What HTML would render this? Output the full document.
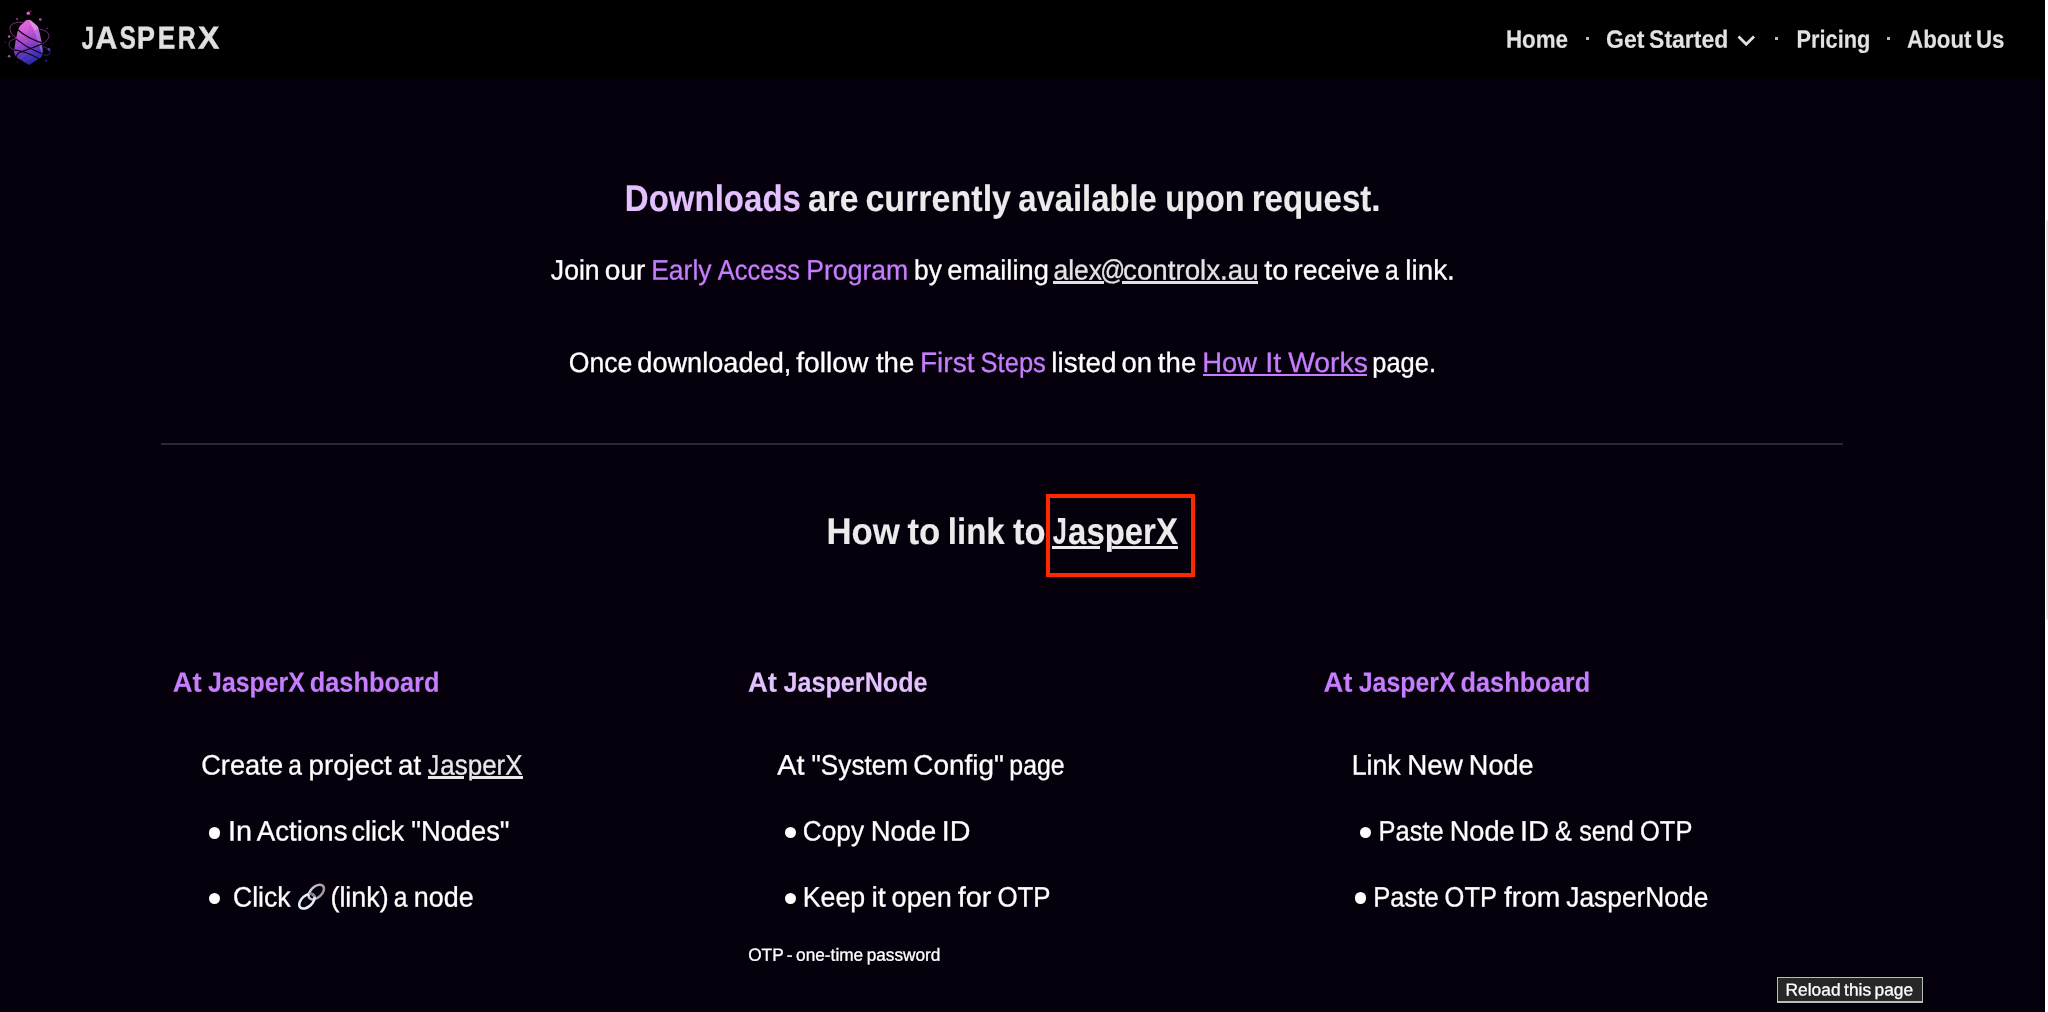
<!DOCTYPE html>
<html lang="en">
<head>
<meta charset="utf-8">
<title>JasperX - Downloads</title>
<style>
html,body{margin:0;padding:0;}
body{width:2048px;height:1012px;overflow:hidden;background:#06000c;font-family:"Liberation Sans",sans-serif;position:relative;}
.t{position:absolute;left:0;top:0;white-space:pre;line-height:1;transform-origin:0 0;display:block;}
.b{position:absolute;display:block;}
.dot{position:absolute;width:3px;height:3px;background:#b8b8b8;top:36.6px;}
.bul{position:absolute;width:11.2px;height:11.2px;border-radius:50%;background:#fff;}
.ul{position:absolute;height:2px;}
</style>
</head>
<body>
<!-- header -->
<div class="b" style="left:0;top:0;width:2048px;height:79px;background:#000"></div>

<!-- logo -->
<svg class="b" style="left:0;top:0" width="64" height="79" viewBox="0 0 64 79">
  <defs>
    <linearGradient id="cg" x1="0.38" y1="0" x2="0.62" y2="1">
      <stop offset="0" stop-color="#e068d8"/>
      <stop offset="0.28" stop-color="#c452d2"/>
      <stop offset="0.52" stop-color="#9242c8"/>
      <stop offset="0.76" stop-color="#4f33b8"/>
      <stop offset="1" stop-color="#2526a2"/>
    </linearGradient>
    <clipPath id="cc"><path d="M28.75 19.7 Q27 19.8 25.7 20.6 L19.9 25.9 Q18.3 28.5 17.4 32.3 L15.75 40 L14.2 49.4 Q13.9 52 14.5 53.8 Q15.3 56.2 17.1 57.7 L27.6 64.3 Q28.75 65.1 29.9 64.4 L40.65 57.7 Q41.9 56.6 42.3 54.95 Q42.9 52.5 42.75 49.97 L41.9 42.8 L40.1 34.5 L38.4 27.8 Q37.8 26.4 36.8 25.6 L31.8 20.9 Q30.4 19.7 28.75 19.7 Z"/></clipPath>
  </defs>
  <!-- orbit rings (outside portions) -->
  <g fill="none" stroke-width="0.85" stroke-linecap="round">
    <path d="M22.7 22.3 Q17 21.6 13.5 23.4 Q10 25.2 9.9 27.8 Q9.9 30.6 11.3 33.4 Q12.8 35.6 16 37.8" stroke="#8b3f88"/>
    <path d="M15.7 38.4 Q11.5 39.6 9.7 41.7 Q8.6 43.6 9.1 45.5 Q10 47.6 11.9 48.9 Q13.2 49.7 14.9 50.2" stroke="#74367e"/>
    <path d="M39.8 29.2 Q44 29.8 46.7 31.7 Q48.9 33.6 48.95 36.1 Q48.8 38.6 46.7 40.6 Q45 42.4 42.6 43.9" stroke="#7c3a86"/>
    <path d="M43.4 46.6 Q46.4 47.8 48.4 49.4 Q50.3 50.8 50.3 52.2 Q50.2 53.8 48.95 54.7 Q47 55.6 44 55.2" stroke="#352d92"/>
  </g>
  <!-- crystal -->
  <path d="M28.75 19.7 Q27 19.8 25.7 20.6 L19.9 25.9 Q18.3 28.5 17.4 32.3 L15.75 40 L14.2 49.4 Q13.9 52 14.5 53.8 Q15.3 56.2 17.1 57.7 L27.6 64.3 Q28.75 65.1 29.9 64.4 L40.65 57.7 Q41.9 56.6 42.3 54.95 Q42.9 52.5 42.75 49.97 L41.9 42.8 L40.1 34.5 L38.4 27.8 Q37.8 26.4 36.8 25.6 L31.8 20.9 Q30.4 19.7 28.75 19.7 Z" fill="url(#cg)"/>
  <g clip-path="url(#cc)">
    <path d="M29.2 19.6 L37.2 25.8 L38.7 28.6 L34.3 30.6 L31 24.4 Z" fill="#f0c6f2" opacity="0.5"/>
    <path d="M38.7 28.6 L42.9 50 L42.4 55.2 L39 45 L34.3 30.6 Z" fill="#cfa4e6" opacity="0.38"/>
    <path d="M28.6 19.7 L31 24.4 L26 34 L18.4 28 Z" fill="#ff86ea" opacity="0.16"/>
    <g stroke="#fff" stroke-width="0.5" opacity="0.13" fill="none">
      <path d="M15 47.2 L27 40.2"/><path d="M15.6 52.6 L24.4 47"/><path d="M20 58.4 L31 50.4"/><path d="M24.5 61.4 L33 55.4"/><path d="M27 36.5 L34.5 31"/>
    </g>
    <!-- black wrap bands -->
    <g fill="none" stroke="#0b0411" stroke-width="1.1">
      <path d="M16.9 29 Q27.5 38.6 43.2 43.4"/>
      <path d="M15 38.1 Q24 45 30.1 48.3 Q36.5 51.6 43.6 54.2"/>
      <path d="M43 43.6 Q35.5 46.8 29 48.9 Q22.5 51 18.2 53.3 Q16.6 54.6 16.4 57.4"/>
      <path d="M13.6 49.8 Q20.5 50.9 26.3 52.7 Q33.5 55.4 40.5 59.5"/>
    </g>
  </g>
  <!-- sparkles -->
  <g>
    <circle cx="28.3" cy="13.2" r="1.75" fill="#dc5ad2"/>
    <circle cx="30.7" cy="11.2" r="0.7" fill="#a6479e"/>
    <circle cx="17.1" cy="19" r="1.05" fill="#8c3f8c"/>
    <circle cx="40.3" cy="19.5" r="1.35" fill="#bd4fbd"/>
    <circle cx="47" cy="28.3" r="0.8" fill="#6a2f6e"/>
    <circle cx="9.1" cy="36.4" r="1.25" fill="#bd4fbd"/>
    <circle cx="5.4" cy="42.2" r="0.7" fill="#4e2552"/>
    <circle cx="9.1" cy="56.3" r="1.3" fill="#a848b8"/>
    <circle cx="17.4" cy="62.1" r="0.7" fill="#4c2a70"/>
    <circle cx="48.95" cy="49.4" r="1.35" fill="#5a3cb8"/>
    <circle cx="46.2" cy="60.8" r="1" fill="#2c2c98"/>
    <circle cx="51.4" cy="44.4" r="0.55" fill="#2a1f4a"/>
  </g>
</svg>

<!-- nav separators + chevron -->
<span class="dot" style="left:1586px"></span>
<span class="dot" style="left:1775.2px"></span>
<span class="dot" style="left:1887px"></span>
<svg class="b" style="left:1734px;top:32px" width="24" height="18" viewBox="0 0 24 18">
  <polyline points="4.5,4.6 12.25,12.3 20,4.6" fill="none" stroke="#e2e2e2" stroke-width="2.8" stroke-linecap="butt" stroke-linejoin="miter"/>
</svg>

<!-- hr -->
<div class="b" style="left:161px;top:443px;width:1682px;height:2px;background:#2a2831"></div>

<!-- underlines (with skip-ink gaps) -->
<div class="ul" style="left:1053.3px;top:281.2px;width:50.8px;height:2.4px;background:#e2e2e2"></div>
<div class="ul" style="left:1122.4px;top:281.2px;width:135.6px;height:2.4px;background:#e2e2e2"></div>
<div class="ul" style="left:1202.6px;top:373.8px;width:164.6px;height:2.3px;background:#c77dff"></div>
<div class="ul" style="left:1052.3px;top:546.2px;width:47.9px;height:2.7px;background:#ebebeb"></div>
<div class="ul" style="left:1111.6px;top:546.2px;width:66.6px;height:2.7px;background:#ebebeb"></div>
<div class="ul" style="left:427.5px;top:776.2px;width:36.5px;height:2.4px;background:#e8e8e8"></div>
<div class="ul" style="left:472.4px;top:776.2px;width:50.7px;height:2.4px;background:#e8e8e8"></div>

<!-- red highlight box -->
<div class="b" style="left:1046px;top:494px;width:141px;height:75px;border:4px solid #ff2800"></div>

<!-- bullets -->
<span class="bul" style="left:209px;top:827.4px"></span>
<span class="bul" style="left:209px;top:892.8px"></span>
<span class="bul" style="left:784.8px;top:827.3px"></span>
<span class="bul" style="left:784.8px;top:892.9px"></span>
<span class="bul" style="left:1360px;top:826.9px"></span>
<span class="bul" style="left:1354.5px;top:892.4px"></span>

<!-- link emoji -->
<svg class="b" style="left:296px;top:882px" width="32" height="30" viewBox="0 0 32 30">
  <defs>
    <linearGradient id="lk" x1="0" y1="0" x2="1" y2="1">
      <stop offset="0" stop-color="#d4e4f4"/>
      <stop offset="0.45" stop-color="#b9b6bb"/>
      <stop offset="1" stop-color="#9c8f8f"/>
    </linearGradient>
  </defs>
  <g fill="none" stroke-width="2.5">
    <ellipse cx="20.3" cy="10.1" rx="9.1" ry="5.5" transform="rotate(-42.6 20.3 10.1)" stroke="url(#lk)"/>
    <ellipse cx="10.9" cy="19.2" rx="9.1" ry="5.5" transform="rotate(-42.6 10.9 19.2)" stroke="#e4eef7"/>
    <path d="M13.3 12.1 Q17.6 11.4 18.6 14.6" stroke="#7f8086" stroke-width="2.2"/>
  </g>
</svg>

<!-- tooltip -->
<div class="b" style="left:1777px;top:976.7px;width:146px;height:26.2px;background:#bcbcbc;box-shadow:0 0 0 1px #000"></div>
<div class="b" style="left:1778.4px;top:978.1px;width:143.2px;height:23.4px;background:#272727"></div>

<!-- scrollbar -->
<div class="b" style="left:2044px;top:79px;width:1px;height:933px;background:#000"></div>
<div class="b" style="left:2045px;top:0;width:3px;height:1012px;background:#fff"></div>
<div class="b" style="left:2046px;top:220px;width:4px;height:400px;background:#e0e0e0;border-radius:2px 0 0 2px"></div>

<div style="position:absolute;left:0;top:0;width:2048px;height:1012px;will-change:transform">
<span class="t" style="font-size:31.8px;color:#e0e0e0;font-weight:700;-webkit-text-stroke:0.45px #e0e0e0;transform:translate(81.70px,22.60px) skewY(0.04deg) scale(0.68750,1);">J</span><span class="t" style="font-size:31.8px;color:#e0e0e0;font-weight:700;-webkit-text-stroke:0.45px #e0e0e0;transform:translate(95.20px,22.59px) skewY(0.04deg) scale(0.96087,1);">A</span><span class="t" style="font-size:31.8px;color:#e0e0e0;font-weight:700;-webkit-text-stroke:0.45px #e0e0e0;transform:translate(119.40px,22.59px) skewY(0.04deg) scale(0.77000,1);">S</span><span class="t" style="font-size:31.8px;color:#e0e0e0;font-weight:700;-webkit-text-stroke:0.45px #e0e0e0;transform:translate(137.06px,22.59px) skewY(0.04deg) scale(0.84474,1);">P</span><span class="t" style="font-size:31.8px;color:#e0e0e0;font-weight:700;-webkit-text-stroke:0.45px #e0e0e0;transform:translate(157.86px,22.59px) skewY(0.04deg) scale(0.82222,1);">E</span><span class="t" style="font-size:31.8px;color:#e0e0e0;font-weight:700;-webkit-text-stroke:0.45px #e0e0e0;transform:translate(177.84px,22.59px) skewY(0.04deg) scale(0.78095,1);">R</span><span class="t" style="font-size:31.8px;color:#e0e0e0;font-weight:700;-webkit-text-stroke:0.45px #e0e0e0;transform:translate(198.10px,22.59px) skewY(0.04deg) scale(1.00476,1);">X</span>
<span class="t" style="font-size:25px;color:#e2e2e2;font-weight:700;-webkit-text-stroke:0.12px #e2e2e2;transform:translate(1505.91px,26.78px) skewY(0.04deg) scale(0.89418,1);">Home</span>
<span class="t" style="font-size:25px;color:#e2e2e2;font-weight:700;word-spacing:-0.075em;-webkit-text-stroke:0.12px #e2e2e2;transform:translate(1606.08px,26.76px) skewY(0.04deg) scale(0.91955,1);">Get Started</span>
<span class="t" style="font-size:25px;color:#e2e2e2;font-weight:700;-webkit-text-stroke:0.12px #e2e2e2;transform:translate(1796.43px,26.77px) skewY(0.04deg) scale(0.87183,1);">Pricing</span>
<span class="t" style="font-size:25px;color:#e2e2e2;font-weight:700;word-spacing:-0.075em;-webkit-text-stroke:0.12px #e2e2e2;transform:translate(1907.10px,26.77px) skewY(0.04deg) scale(0.89182,1);">About Us</span>
<span class="t" style="font-size:37px;color:#e3c0ff;font-weight:700;-webkit-text-stroke:0.12px #e3c0ff;transform:translate(624.82px,179.94px) skewY(0.04deg) scale(0.89237,1);">Downloads</span>
<span class="t" style="font-size:37px;color:#ebebeb;font-weight:700;-webkit-text-stroke:0.12px #ebebeb;transform:translate(807.89px,179.98px) skewY(0.04deg) scale(0.91151,1);">are</span>
<span class="t" style="font-size:37px;color:#ebebeb;font-weight:700;-webkit-text-stroke:0.12px #ebebeb;transform:translate(865.38px,179.95px) skewY(0.04deg) scale(0.91977,1);">currently</span>
<span class="t" style="font-size:37px;color:#ebebeb;font-weight:700;-webkit-text-stroke:0.12px #ebebeb;transform:translate(1018.21px,179.95px) skewY(0.04deg) scale(0.88659,1);">available</span>
<span class="t" style="font-size:37px;color:#ebebeb;font-weight:700;-webkit-text-stroke:0.12px #ebebeb;transform:translate(1165.24px,179.97px) skewY(0.04deg) scale(0.87785,1);">upon</span>
<span class="t" style="font-size:37px;color:#ebebeb;font-weight:700;-webkit-text-stroke:0.12px #ebebeb;transform:translate(1251.71px,179.96px) skewY(0.04deg) scale(0.89506,1);">request.</span>
<span class="t" style="font-size:28px;color:#fff;-webkit-text-stroke:0.3px #fff;transform:translate(550.86px,256.53px) skewY(0.04deg) scale(0.94875,1);">Join</span>
<span class="t" style="font-size:28px;color:#fff;-webkit-text-stroke:0.3px #fff;transform:translate(604.79px,256.54px) skewY(0.04deg) scale(1.00414,1);">our</span>
<span class="t" style="font-size:28px;color:#c77dff;-webkit-text-stroke:0.3px #c77dff;transform:translate(651.14px,256.53px) skewY(0.04deg) scale(0.94823,1);">Early</span>
<span class="t" style="font-size:28px;color:#c77dff;-webkit-text-stroke:0.3px #c77dff;transform:translate(717.82px,256.52px) skewY(0.04deg) scale(0.90956,1);">Access</span>
<span class="t" style="font-size:28px;color:#c77dff;-webkit-text-stroke:0.3px #c77dff;transform:translate(806.25px,256.51px) skewY(0.04deg) scale(0.95037,1);">Program</span>
<span class="t" style="font-size:28px;color:#fff;-webkit-text-stroke:0.3px #fff;transform:translate(914.02px,256.54px) skewY(0.04deg) scale(0.93991,1);">by</span>
<span class="t" style="font-size:28px;color:#fff;-webkit-text-stroke:0.3px #fff;transform:translate(947.21px,256.51px) skewY(0.04deg) scale(0.97461,1);">emailing</span>
<span class="t" style="font-size:28px;color:#e4e4e4;-webkit-text-stroke:0.3px #e4e4e4;transform:translate(1053.44px,256.53px) skewY(0.04deg) scale(0.94524,1);">alex</span><span class="t" style="font-size:28px;color:#e4e4e4;-webkit-text-stroke:0.3px #e4e4e4;transform:translate(1100.29px,256.54px) skewY(0.04deg) scale(0.88000,1);">@</span><span class="t" style="font-size:28px;color:#e4e4e4;-webkit-text-stroke:0.3px #e4e4e4;transform:translate(1123.01px,256.50px) skewY(0.04deg) scale(0.99038,1);">controlx.au</span>
<span class="t" style="font-size:28px;color:#fff;-webkit-text-stroke:0.3px #fff;transform:translate(1264.36px,256.54px) skewY(0.04deg) scale(1.03000,1);">to</span>
<span class="t" style="font-size:28px;color:#fff;-webkit-text-stroke:0.3px #fff;transform:translate(1293.87px,256.52px) skewY(0.04deg) scale(0.94970,1);">receive</span>
<span class="t" style="font-size:28px;color:#fff;-webkit-text-stroke:0.3px #fff;transform:translate(1384.94px,256.54px) skewY(0.04deg) scale(0.88000,1);">a</span>
<span class="t" style="font-size:28px;color:#fff;-webkit-text-stroke:0.3px #fff;transform:translate(1405.28px,256.53px) skewY(0.04deg) scale(0.99445,1);">link.</span>
<span class="t" style="font-size:28px;color:#fff;-webkit-text-stroke:0.3px #fff;transform:translate(568.69px,349.08px) skewY(0.04deg) scale(0.95263,1);">Once</span>
<span class="t" style="font-size:28px;color:#fff;-webkit-text-stroke:0.3px #fff;transform:translate(637.27px,349.05px) skewY(0.04deg) scale(0.97018,1);">downloaded,</span>
<span class="t" style="font-size:28px;color:#fff;-webkit-text-stroke:0.3px #fff;transform:translate(796.23px,349.07px) skewY(0.04deg) scale(1.00874,1);">follow</span>
<span class="t" style="font-size:28px;color:#fff;-webkit-text-stroke:0.3px #fff;transform:translate(875.94px,349.09px) skewY(0.04deg) scale(0.98671,1);">the</span>
<span class="t" style="font-size:28px;color:#c77dff;-webkit-text-stroke:0.3px #c77dff;transform:translate(919.95px,349.08px) skewY(0.04deg) scale(1.00395,1);">First</span>
<span class="t" style="font-size:28px;color:#c77dff;-webkit-text-stroke:0.3px #c77dff;transform:translate(980.57px,349.08px) skewY(0.04deg) scale(0.91202,1);">Steps</span>
<span class="t" style="font-size:28px;color:#fff;-webkit-text-stroke:0.3px #fff;transform:translate(1051.28px,349.08px) skewY(0.04deg) scale(0.99728,1);">listed</span>
<span class="t" style="font-size:28px;color:#fff;-webkit-text-stroke:0.3px #fff;transform:translate(1121.49px,349.09px) skewY(0.04deg) scale(0.98264,1);">on</span>
<span class="t" style="font-size:28px;color:#fff;-webkit-text-stroke:0.3px #fff;transform:translate(1157.87px,349.09px) skewY(0.04deg) scale(0.98671,1);">the</span>
<span class="t" style="font-size:28px;color:#c77dff;-webkit-text-stroke:0.3px #c77dff;transform:translate(1202.27px,349.08px) skewY(0.04deg) scale(0.97845,1);">How</span>
<span class="t" style="font-size:28px;color:#c77dff;-webkit-text-stroke:0.3px #c77dff;transform:translate(1265.16px,349.09px) skewY(0.04deg) scale(1.03000,1);">It</span>
<span class="t" style="font-size:28px;color:#c77dff;-webkit-text-stroke:0.3px #c77dff;transform:translate(1288.16px,349.07px) skewY(0.04deg) scale(1.01082,1);">Works</span>
<span class="t" style="font-size:28px;color:#fff;-webkit-text-stroke:0.3px #fff;transform:translate(1372.29px,349.08px) skewY(0.04deg) scale(0.90951,1);">page.</span>
<span class="t" style="font-size:37px;color:#ebebeb;font-weight:700;-webkit-text-stroke:0.12px #ebebeb;transform:translate(826.47px,512.97px) skewY(0.04deg) scale(0.94046,1);">How</span>
<span class="t" style="font-size:37px;color:#ebebeb;font-weight:700;-webkit-text-stroke:0.12px #ebebeb;transform:translate(907.45px,512.99px) skewY(0.04deg) scale(0.94252,1);">to</span>
<span class="t" style="font-size:37px;color:#ebebeb;font-weight:700;-webkit-text-stroke:0.12px #ebebeb;transform:translate(947.78px,512.98px) skewY(0.04deg) scale(0.89352,1);">link</span>
<span class="t" style="font-size:37px;color:#ebebeb;font-weight:700;-webkit-text-stroke:0.12px #ebebeb;transform:translate(1013.04px,512.99px) skewY(0.04deg) scale(0.93541,1);">to</span>
<span class="t" style="font-size:37px;color:#ebebeb;font-weight:700;-webkit-text-stroke:0.12px #ebebeb;transform:translate(1052.80px,513.00px) skewY(0.04deg) scale(0.68421,1);">J</span><span class="t" style="font-size:37px;color:#ebebeb;font-weight:700;-webkit-text-stroke:0.12px #ebebeb;transform:translate(1068.11px,512.96px) skewY(0.04deg) scale(0.88892,1);">asperX</span>
<span class="t" style="font-size:28px;color:#c77dff;font-weight:700;-webkit-text-stroke:0.12px #c77dff;transform:translate(172.69px,668.79px) skewY(0.04deg) scale(0.98000,1);">At</span>
<span class="t" style="font-size:28px;color:#c77dff;font-weight:700;-webkit-text-stroke:0.12px #c77dff;transform:translate(208.07px,668.77px) skewY(0.04deg) scale(0.88823,1);">JasperX</span>
<span class="t" style="font-size:28px;color:#c77dff;font-weight:700;-webkit-text-stroke:0.12px #c77dff;transform:translate(309.70px,668.75px) skewY(0.04deg) scale(0.90647,1);">dashboard</span>
<span class="t" style="font-size:28px;color:#e3c0ff;font-weight:700;-webkit-text-stroke:0.12px #e3c0ff;transform:translate(748.04px,668.79px) skewY(0.04deg) scale(0.98000,1);">At</span>
<span class="t" style="font-size:28px;color:#e3c0ff;font-weight:700;-webkit-text-stroke:0.12px #e3c0ff;transform:translate(783.48px,668.75px) skewY(0.04deg) scale(0.89884,1);">JasperNode</span>
<span class="t" style="font-size:28px;color:#c77dff;font-weight:700;-webkit-text-stroke:0.12px #c77dff;transform:translate(1323.39px,668.79px) skewY(0.04deg) scale(0.98000,1);">At</span>
<span class="t" style="font-size:28px;color:#c77dff;font-weight:700;-webkit-text-stroke:0.12px #c77dff;transform:translate(1358.77px,668.77px) skewY(0.04deg) scale(0.88823,1);">JasperX</span>
<span class="t" style="font-size:28px;color:#c77dff;font-weight:700;-webkit-text-stroke:0.12px #c77dff;transform:translate(1460.40px,668.75px) skewY(0.04deg) scale(0.90647,1);">dashboard</span>
<span class="t" style="font-size:28px;color:#fff;-webkit-text-stroke:0.3px #fff;transform:translate(201.13px,751.57px) skewY(0.04deg) scale(0.97484,1);">Create</span>
<span class="t" style="font-size:28px;color:#fff;-webkit-text-stroke:0.3px #fff;transform:translate(288.22px,751.59px) skewY(0.04deg) scale(0.88000,1);">a</span>
<span class="t" style="font-size:28px;color:#fff;-webkit-text-stroke:0.3px #fff;transform:translate(308.59px,751.57px) skewY(0.04deg) scale(0.98854,1);">project</span>
<span class="t" style="font-size:28px;color:#fff;-webkit-text-stroke:0.3px #fff;transform:translate(398.01px,751.59px) skewY(0.04deg) scale(0.98732,1);">at</span>
<span class="t" style="font-size:28px;color:#e8e8e8;-webkit-text-stroke:0.3px #e8e8e8;transform:translate(428.10px,751.60px) skewY(0.04deg) scale(0.78333,1);">J</span><span class="t" style="font-size:28px;color:#e8e8e8;-webkit-text-stroke:0.3px #e8e8e8;transform:translate(440.27px,751.57px) skewY(0.04deg) scale(0.92798,1);">asperX</span>
<span class="t" style="font-size:28px;color:#fff;-webkit-text-stroke:0.3px #fff;transform:translate(777.35px,751.59px) skewY(0.04deg) scale(1.03000,1);">At</span>
<span class="t" style="font-size:28px;color:#fff;-webkit-text-stroke:0.3px #fff;transform:translate(811.54px,751.57px) skewY(0.04deg) scale(0.93573,1);">"System</span>
<span class="t" style="font-size:28px;color:#fff;-webkit-text-stroke:0.3px #fff;transform:translate(913.28px,751.57px) skewY(0.04deg) scale(0.99642,1);">Config"</span>
<span class="t" style="font-size:28px;color:#fff;-webkit-text-stroke:0.3px #fff;transform:translate(1009.33px,751.58px) skewY(0.04deg) scale(0.88779,1);">page</span>
<span class="t" style="font-size:28px;color:#fff;-webkit-text-stroke:0.3px #fff;transform:translate(1351.69px,751.58px) skewY(0.04deg) scale(0.95397,1);">Link</span>
<span class="t" style="font-size:28px;color:#fff;-webkit-text-stroke:0.3px #fff;transform:translate(1407.27px,751.58px) skewY(0.04deg) scale(0.99273,1);">New</span>
<span class="t" style="font-size:28px;color:#fff;-webkit-text-stroke:0.3px #fff;transform:translate(1468.85px,751.58px) skewY(0.04deg) scale(0.96647,1);">Node</span>
<span class="t" style="font-size:28px;color:#fff;-webkit-text-stroke:0.3px #fff;transform:translate(227.98px,817.59px) skewY(0.04deg) scale(1.03000,1);">In</span>
<span class="t" style="font-size:28px;color:#fff;-webkit-text-stroke:0.3px #fff;transform:translate(256.86px,817.57px) skewY(0.04deg) scale(0.98695,1);">Actions</span>
<span class="t" style="font-size:28px;color:#fff;-webkit-text-stroke:0.3px #fff;transform:translate(351.48px,817.58px) skewY(0.04deg) scale(0.96758,1);">click</span>
<span class="t" style="font-size:28px;color:#fff;-webkit-text-stroke:0.3px #fff;transform:translate(411.22px,817.57px) skewY(0.04deg) scale(0.97527,1);">"Nodes"</span>
<span class="t" style="font-size:28px;color:#fff;-webkit-text-stroke:0.3px #fff;transform:translate(802.78px,817.58px) skewY(0.04deg) scale(0.93687,1);">Copy</span>
<span class="t" style="font-size:28px;color:#fff;-webkit-text-stroke:0.3px #fff;transform:translate(870.69px,817.58px) skewY(0.04deg) scale(0.98027,1);">Node</span>
<span class="t" style="font-size:28px;color:#fff;-webkit-text-stroke:0.3px #fff;transform:translate(941.69px,817.59px) skewY(0.04deg) scale(1.02466,1);">ID</span>
<span class="t" style="font-size:28px;color:#fff;-webkit-text-stroke:0.3px #fff;transform:translate(1378.62px,817.58px) skewY(0.04deg) scale(0.91032,1);">Paste</span>
<span class="t" style="font-size:28px;color:#fff;-webkit-text-stroke:0.3px #fff;transform:translate(1449.77px,817.58px) skewY(0.04deg) scale(0.96840,1);">Node</span>
<span class="t" style="font-size:28px;color:#fff;-webkit-text-stroke:0.3px #fff;transform:translate(1520.10px,817.59px) skewY(0.04deg) scale(1.03000,1);">ID</span>
<span class="t" style="font-size:28px;color:#fff;-webkit-text-stroke:0.3px #fff;transform:translate(1554.97px,817.59px) skewY(0.04deg) scale(0.90438,1);">&amp;</span>
<span class="t" style="font-size:28px;color:#fff;-webkit-text-stroke:0.3px #fff;transform:translate(1579.23px,817.58px) skewY(0.04deg) scale(0.90007,1);">send</span>
<span class="t" style="font-size:28px;color:#fff;-webkit-text-stroke:0.3px #fff;transform:translate(1639.98px,817.58px) skewY(0.04deg) scale(0.91041,1);">OTP</span>
<span class="t" style="font-size:28px;color:#fff;-webkit-text-stroke:0.3px #fff;transform:translate(232.93px,883.58px) skewY(0.04deg) scale(0.95221,1);">Click</span>
<span class="t" style="font-size:28px;color:#fff;-webkit-text-stroke:0.3px #fff;transform:translate(330.42px,883.58px) skewY(0.04deg) scale(0.96186,1);">(link)</span>
<span class="t" style="font-size:28px;color:#fff;-webkit-text-stroke:0.3px #fff;transform:translate(393.79px,883.59px) skewY(0.04deg) scale(0.88000,1);">a</span>
<span class="t" style="font-size:28px;color:#fff;-webkit-text-stroke:0.3px #fff;transform:translate(413.83px,883.58px) skewY(0.04deg) scale(0.96181,1);">node</span>
<span class="t" style="font-size:28px;color:#fff;-webkit-text-stroke:0.3px #fff;transform:translate(802.69px,883.58px) skewY(0.04deg) scale(0.95587,1);">Keep</span>
<span class="t" style="font-size:28px;color:#fff;-webkit-text-stroke:0.3px #fff;transform:translate(871.41px,883.59px) skewY(0.04deg) scale(1.03000,1);">it</span>
<span class="t" style="font-size:28px;color:#fff;-webkit-text-stroke:0.3px #fff;transform:translate(891.61px,883.58px) skewY(0.04deg) scale(0.96728,1);">open</span>
<span class="t" style="font-size:28px;color:#fff;-webkit-text-stroke:0.3px #fff;transform:translate(957.80px,883.59px) skewY(0.04deg) scale(1.03000,1);">for</span>
<span class="t" style="font-size:28px;color:#fff;-webkit-text-stroke:0.3px #fff;transform:translate(997.41px,883.58px) skewY(0.04deg) scale(0.92460,1);">OTP</span>
<span class="t" style="font-size:28px;color:#fff;-webkit-text-stroke:0.3px #fff;transform:translate(1373.22px,883.58px) skewY(0.04deg) scale(0.91520,1);">Paste</span>
<span class="t" style="font-size:28px;color:#fff;-webkit-text-stroke:0.3px #fff;transform:translate(1444.56px,883.58px) skewY(0.04deg) scale(0.91041,1);">OTP</span>
<span class="t" style="font-size:28px;color:#fff;-webkit-text-stroke:0.3px #fff;transform:translate(1503.93px,883.58px) skewY(0.04deg) scale(1.00753,1);">from</span>
<span class="t" style="font-size:28px;color:#fff;-webkit-text-stroke:0.3px #fff;transform:translate(1566.26px,883.55px) skewY(0.04deg) scale(0.94085,1);">JasperNode</span>
<span class="t" style="font-size:17.6px;color:#fff;word-spacing:-0.075em;-webkit-text-stroke:0.3px #fff;transform:translate(748.20px,946.63px) skewY(0.04deg) scale(0.98010,1);">OTP - one-time password</span>
<span class="t" style="font-size:17.2px;color:#fff;word-spacing:-0.075em;-webkit-text-stroke:0.3px #fff;transform:translate(1785.59px,981.46px) skewY(0.04deg) scale(1.00913,1);">Reload this page</span>
</div>
</body>
</html>
